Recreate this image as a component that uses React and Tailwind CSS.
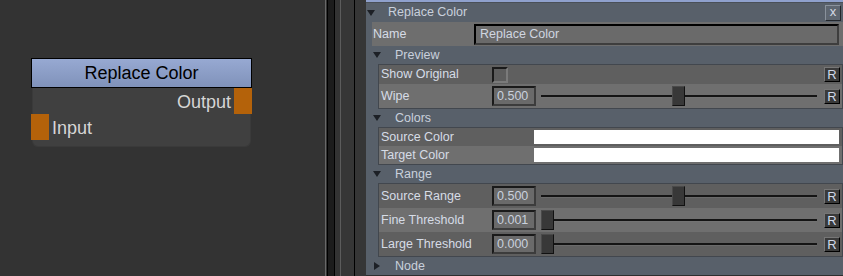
import React from 'react'

// Node editor canvas on the left, parameter panel on the right

function TriDown() {
  return (
    <svg width="8" height="6" viewBox="0 0 8 6" className="shrink-0">
      <path d="M0 0H8L4 6Z" fill="#1d2026" />
    </svg>
  )
}

function TriRight() {
  return (
    <svg width="6" height="8" viewBox="0 0 6 8" className="shrink-0">
      <path d="M0 0V8L6 4Z" fill="#1d2026" />
    </svg>
  )
}

function ResetButton() {
  return (
    <div className="w-[16px] h-[15px] shrink-0 bg-[#3a3a3a] border-t border-l border-[#767676] border-r border-b border-r-black border-b-black flex items-center justify-center text-[13px] leading-none text-[#cfd8ea]">
      R
    </div>
  )
}

function NumberField({ value }) {
  return (
    <div className="w-[44px] h-[20px] shrink-0 bg-[#6a6a6a] border-2 border-t-[#1a1a1a] border-l-[#1a1a1a] border-r-[#3c3c3c] border-b-[#3c3c3c] flex items-center pl-[3px] text-[#c9d1dd]">
      {value}
    </div>
  )
}

function Slider({ pos }) {
  return (
    <div className="relative w-[276px] h-[20px] ml-[5px] shrink-0">
      <div className="absolute left-0 right-0 top-[9px] h-[2px] bg-[#141414]" />
      <div className="absolute left-0 right-0 top-[11px] h-px bg-[#7a7a7a] opacity-40" />
      <div
        className="absolute top-0 w-[13px] h-[20px] bg-[#383838] border border-t-[#4a4a4a] border-l-[#4a4a4a] border-r-[#111] border-b-[#111]"
        style={{ left: pos }}
      />
    </div>
  )
}

function SectionHeader({ title, open = true }) {
  return (
    <div className="h-[18px] flex items-center pl-[7px] text-[#c9d0dc]">
      {open ? <TriDown /> : <div className="pl-[1px]"><TriRight /></div>}
      <span className={open ? 'ml-[14px]' : 'ml-[15px]'}>{title}</span>
    </div>
  )
}

function ParamRow({ label, dark, height = 'h-[24px]', children }) {
  return (
    <div className={`${height} flex items-center ${dark ? 'bg-[#5f5f5f]' : 'bg-[#6f6f6f]'}`}>
      <div className="w-[113px] shrink-0 pl-[2px] text-[#d6dce6]">{label}</div>
      {children}
    </div>
  )
}

function SliderRow({ label, value, pos, dark }) {
  return (
    <ParamRow label={label} dark={dark}>
      <NumberField value={value} />
      <Slider pos={pos} />
      <div className="ml-[7px]">
        <ResetButton />
      </div>
    </ParamRow>
  )
}

function ColorRow({ label, dark }) {
  return (
    <ParamRow label={label} dark={dark} height="h-[18px]">
      <div className="ml-[42px] h-[14px] flex-1 mr-[3px] bg-white" />
    </ParamRow>
  )
}

function Group({ children }) {
  return <div className="ml-[12px] border border-[#42474e]">{children}</div>
}

function NodeBox() {
  return (
    <div className="absolute left-[31px] top-[58px] w-[221px]">
      <div className="h-[30px] border border-black bg-gradient-to-b from-[#97a9d2] to-[#8092ba] flex items-center justify-center text-[18px] text-black">
        Replace Color
      </div>
      <div className="relative mx-[1px] h-[59px] rounded-b-[6px] bg-[#404040] border border-t-0 border-[#3a3a3a] text-[18px] text-[#d6d6d6]">
        <div className="h-[27px] flex items-center justify-end pr-[19px]">Output</div>
        <div className="h-[26px] flex items-center pl-[19px]">Input</div>
        <div className="absolute -right-[2px] top-0 w-[18px] h-[26px] bg-[#b4620a]" />
        <div className="absolute -left-[2px] top-[26px] w-[18px] h-[26px] bg-[#b4620a]" />
      </div>
    </div>
  )
}

export default function App() {
  return (
    <div
      className="w-[843px] h-[276px] flex overflow-hidden bg-[#333333] text-[12.5px] leading-none"
      style={{ fontFamily: '"Liberation Sans", Arial, sans-serif' }}
    >
      {/* node canvas */}
      <div className="relative w-[325px] shrink-0 bg-[#333333]">
        <NodeBox />
      </div>

      {/* splitter */}
      <div className="w-px shrink-0 bg-[#686868]" />
      <div className="w-px shrink-0 bg-[#333333]" />
      <div className="w-[8px] shrink-0 bg-[#1c1c1c] border-x border-black" />
      <div className="w-[5px] shrink-0 bg-[#333333]" />
      <div className="w-px shrink-0 bg-[#5c5c5c]" />
      <div className="w-[13px] shrink-0 bg-[#363636]" />
      <div className="w-px shrink-0 bg-black" />
      <div className="w-[11px] shrink-0 bg-[#363636]" />

      {/* parameter panel */}
      <div className="w-[477px] shrink-0 flex flex-col bg-[#58606a]">
        <div className="h-[2px] bg-[#8fa1cd]" />
        <div className="h-px bg-[#4a5058]" />
        <div className="h-[19px] flex items-center pl-[1px] pr-[2px] text-[#c9d0dc]">
          <TriDown />
          <span className="ml-[13px]">Replace Color</span>
          <div className="ml-auto w-[16px] h-[16px] bg-[#5e6670] border border-t-[#8a929c] border-l-[#8a929c] border-r-[#23272c] border-b-[#23272c] flex items-center justify-center text-[13px] text-[#d4dae4] pb-[2px]">
            x
          </div>
        </div>

        <div className="ml-[6px] h-[24px] flex items-center bg-[#6e6e6e]">
          <div className="w-[102px] shrink-0 pl-[1px] text-[#d6dce6]">Name</div>
          <div className="flex-1 mr-[4px] h-[21px] bg-[#6a6a6a] border-2 border-t-black border-l-black border-r-[#3e3e3e] border-b-[#3e3e3e] flex items-center pl-[4px] text-[#d0d6e0]">
            Replace Color
          </div>
        </div>

        <SectionHeader title="Preview" />
        <Group>
          <ParamRow label="Show Original" dark height="h-[19px]">
            <div className="w-[16px] h-[16px] shrink-0 bg-[#5d5d5d] border-2 border-t-[#1a1a1a] border-l-[#1a1a1a] border-r-[#7a7a7a] border-b-[#7a7a7a]" />
            <div className="ml-auto mr-[2px]">
              <ResetButton />
            </div>
          </ParamRow>
          <SliderRow label="Wipe" value="0.500" pos={131} />
        </Group>

        <SectionHeader title="Colors" />
        <Group>
          <ColorRow label="Source Color" dark />
          <ColorRow label="Target Color" />
        </Group>

        <SectionHeader title="Range" />
        <Group>
          <SliderRow label="Source Range" value="0.500" pos={131} dark />
          <SliderRow label="Fine Threshold" value="0.001" pos={0} />
          <SliderRow label="Large Threshold" value="0.000" pos={0} dark />
        </Group>

        <SectionHeader title="Node" open={false} />
        <div className="flex-1 bg-[#2e2e2e]" />
      </div>
    </div>
  )
}
